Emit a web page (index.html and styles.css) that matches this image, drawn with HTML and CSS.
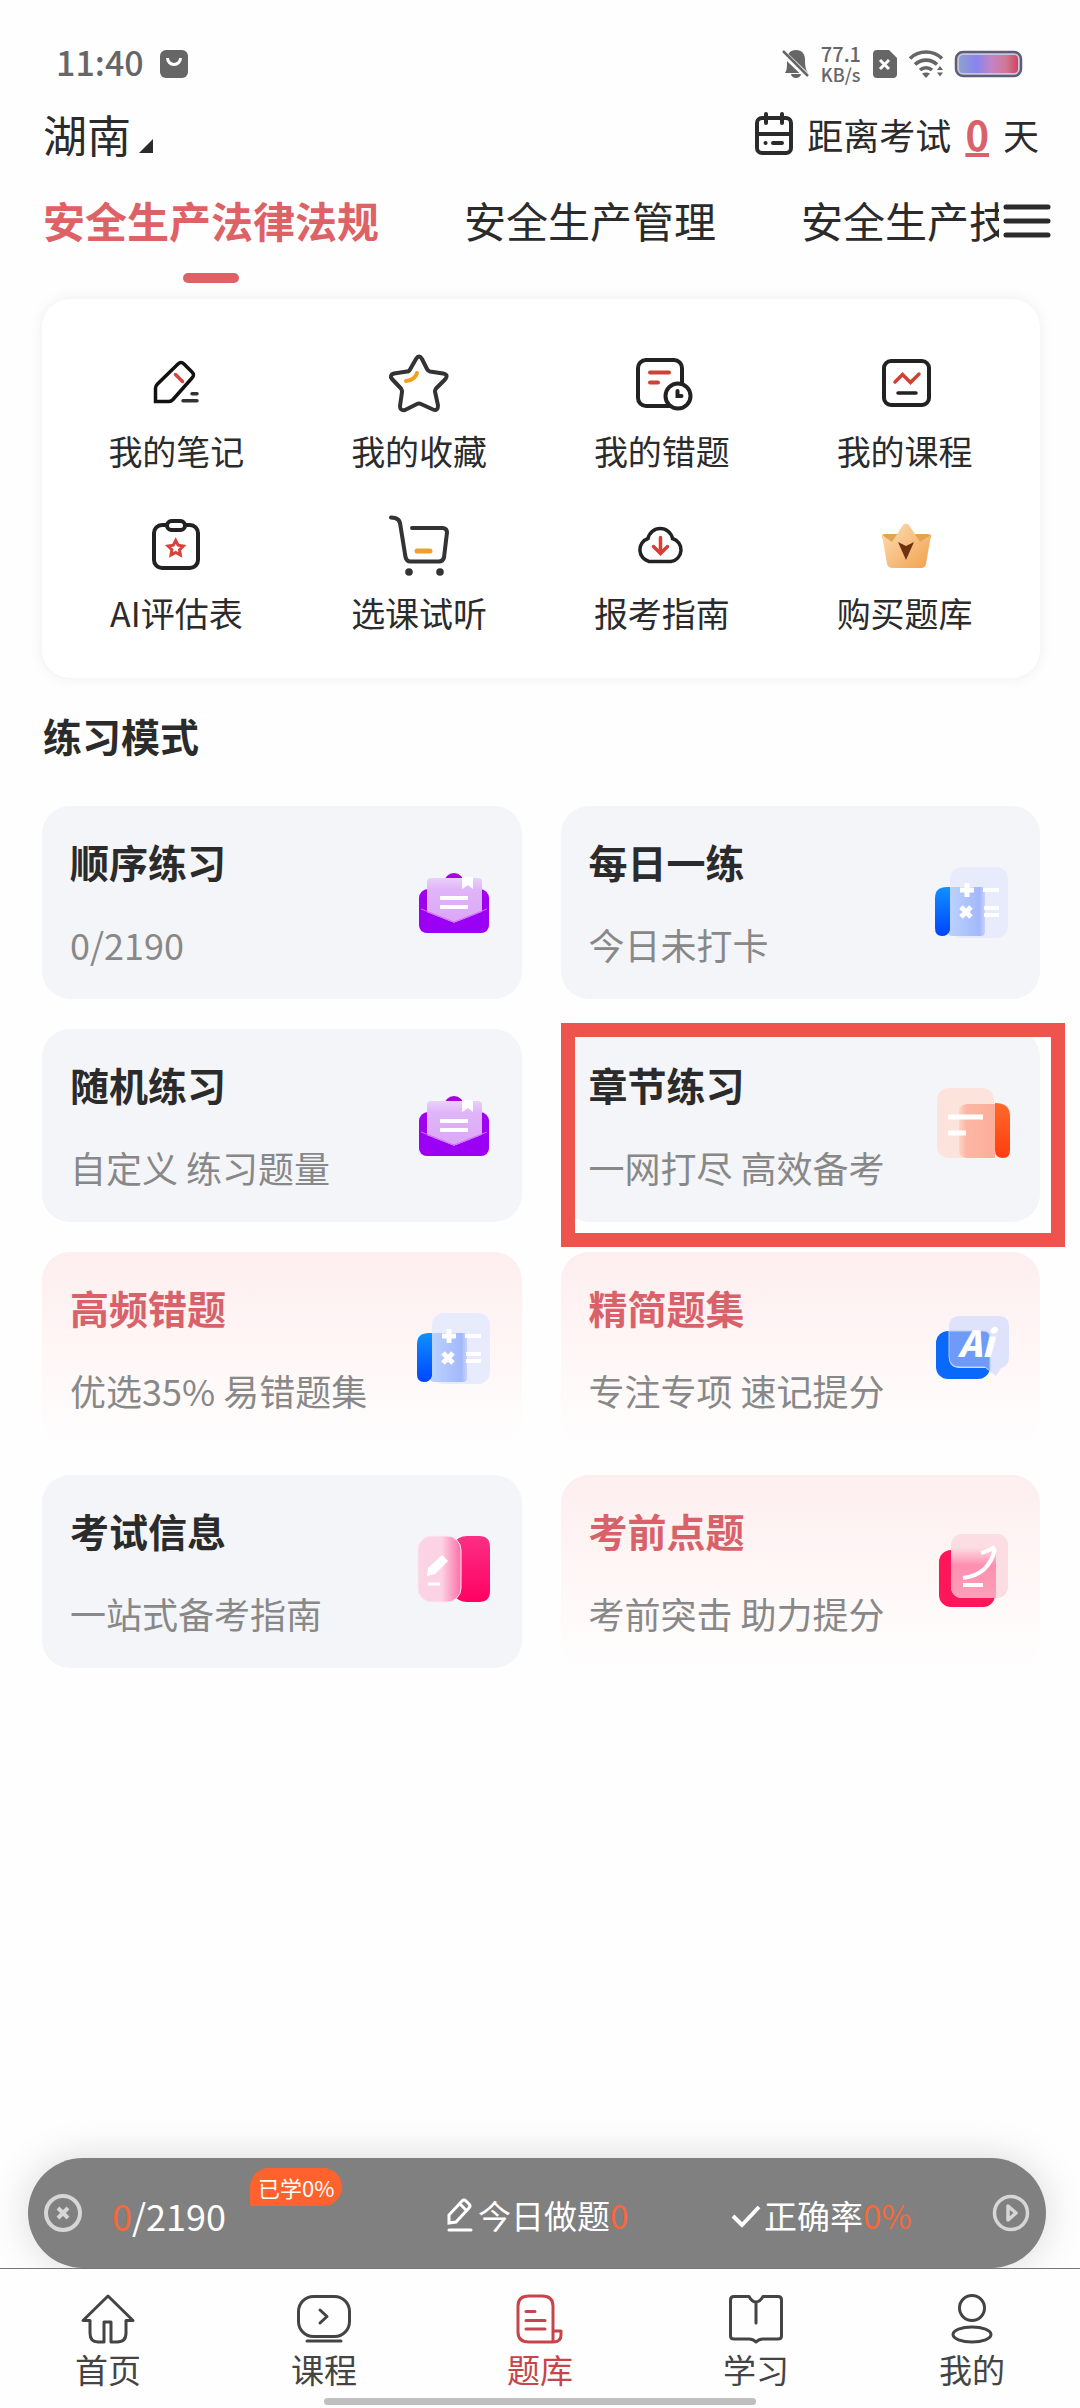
FILE: index.html
```
<!DOCTYPE html>
<html lang="zh-CN">
<head>
    <meta charset="UTF-8">
    <meta name="viewport" content="width=device-width, initial-scale=1">
    <title>题库</title>
    <link rel="stylesheet" href="styles.css">
</head>
<body>

<!-- shared gradients and the icons used more than once -->
<svg class="defs" width="0" height="0" aria-hidden="true">
    <defs>
        <linearGradient id="blue" x1="0" y1="0" x2="0" y2="1"><stop offset="0" stop-color="#1090ff"/><stop offset="1" stop-color="#0044ff"/></linearGradient>
        <linearGradient id="orange" x1="0" y1="0" x2="0" y2="1"><stop offset="0" stop-color="#ff6a2c"/><stop offset="1" stop-color="#ff3c0c"/></linearGradient>
        <linearGradient id="pink" x1="0" y1="0" x2="0" y2="1"><stop offset="0" stop-color="#fb2f85"/><stop offset="1" stop-color="#ff0062"/></linearGradient>
        <linearGradient id="paper" x1="0" y1="0" x2="0" y2="1"><stop offset="0" stop-color="#ead0fa"/><stop offset="0.25" stop-color="#e0b5f8"/><stop offset="1" stop-color="#dba6f6"/></linearGradient>
        <linearGradient id="gold" x1="0" y1="0" x2="1" y2="1"><stop offset="0" stop-color="#fce0b8"/><stop offset="1" stop-color="#f2a04c"/></linearGradient>
        <linearGradient id="calcPane" x1="0" y1="0" x2="1" y2="0"><stop offset="0" stop-color="#bcd3fd"/><stop offset="0.85" stop-color="#a3b8fb"/><stop offset="1" stop-color="#c9d2fb"/></linearGradient>
        <linearGradient id="chapterPane" x1="0" y1="0" x2="1" y2="0"><stop offset="0" stop-color="#fcd5c9"/><stop offset="0.2" stop-color="#fcb7a4"/><stop offset="1" stop-color="#fcae9a"/></linearGradient>
        <linearGradient id="bookPane" x1="0" y1="0" x2="1" y2="0"><stop offset="0.55" stop-color="#fbd3e3"/><stop offset="1" stop-color="#fc6fa8"/></linearGradient>
        <linearGradient id="tipPane" x1="0" y1="0" x2="0" y2="1"><stop offset="0" stop-color="#fcdbe2"/><stop offset="0.35" stop-color="#fd8fb0"/><stop offset="1" stop-color="#fda0b8"/></linearGradient>
        <linearGradient id="cell" x1="0" y1="0" x2="1" y2="0"><stop offset="0" stop-color="#8ea0cc"/><stop offset="0.3" stop-color="#8884f0"/><stop offset="0.55" stop-color="#c483c4"/><stop offset="0.8" stop-color="#cf7894"/><stop offset="1" stop-color="#d04460"/></linearGradient>

        <symbol id="icon-mail" viewBox="0 0 80 80">
            <circle cx="40" cy="22" r="10" fill="#a800e0"/>
            <rect x="5" y="28" width="70" height="44" rx="9" fill="#a000f0"/>
            <path d="M13 52V21q0-4 4-4h47q4 0 4 4v31L40 62z" fill="url(#paper)"/>
            <path d="M5 48l35 14 35-14v15q0 9-9 9H14q-9 0-9-9z" fill="#9b00f5"/>
            <path d="M7 48l33 13 33-13" fill="none" stroke="#cf6df8" stroke-width="1"/>
            <path d="M26 37h28M26 46h28" stroke="#fff" stroke-width="4"/>
            <path d="M48 16h11v12l-5-4-6 4z" fill="#fff"/>
        </symbol>
        <symbol id="icon-calc" viewBox="0 0 80 80">
            <rect x="18" y="6" width="58" height="71" rx="12" fill="#e8ebfc"/>
            <rect x="16" y="26" width="37" height="49" rx="4" fill="url(#calcPane)"/>
            <path d="M18 26v43q-2 6-8 6-7 0-7-8V37q0-11 12-11z" fill="url(#blue)"/>
            <g stroke="#fff" stroke-width="5">
                <path d="M28 29h14M35 22v14M29 46l10 10M39 46L29 56"/>
                <path d="M51 29h16M52 47h15M52 54h15" stroke-width="4"/>
            </g>
        </symbol>
    </defs>
</svg>

<div class="page">
    <div class="status">
        <div class="status-group">
            <span class="clock">11:40</span>
            <svg width="28" height="28" viewBox="0 0 28 28"><rect width="28" height="28" rx="6" fill="#666"/><path d="M7.500 8a6.500 6.500 0 0 0 13 0" fill="none" stroke="#fff" stroke-width="3"/></svg>
        </div>
        <div class="status-group">
            <svg width="26" height="30" viewBox="0 0 26 30"><path d="M13 1c6 0 9 4 9 10 0 7 1 10 3 13H2c2-3 2-6 2-13C4 5 7 1 13 1zM8 25h10a5 4 0 0 1-10 0z" fill="#666"/><path d="M-1 3l26 25" stroke="#fff" stroke-width="6"/><path d="M0 2l25 25" stroke="#666" stroke-width="2.500"/></svg>
            <span class="speed"><span>77.1</span><small>KB/s</small></span>
            <svg width="24" height="28" viewBox="0 0 24 28"><path d="M4 0h12l8 8v16q0 4-4 4H4q-4 0-4-4V4q0-4 4-4z" fill="#666"/><path d="M7 10l9 9M16 10l-9 9" stroke="#fff" stroke-width="3"/></svg>
            <svg width="34" height="28" viewBox="0 0 34 28"><g fill="none" stroke="#666" stroke-width="3.600"><path d="M1 8.500a23 23 0 0 1 32 0"/><path d="M6 14.500a16 16 0 0 1 22 0"/><path d="M11 20a9 9 0 0 1 12 0"/></g><path d="M13 23.500q4-2 8 0L17 28zM28 20l3-4 3 4zM28 22.500h6l-3 4z" fill="#666"/></svg>
            <svg width="67" height="26" viewBox="0 0 67 26"><rect x="1" y="1" width="65" height="24" rx="7" fill="#c8c6dc" stroke="#5d5d78" stroke-width="2.500"/><rect x="4" y="4" width="59" height="18" rx="4" fill="url(#cell)"/></svg>
        </div>
    </div>

    <header class="topbar">
        <button class="city" type="button">湖南
            <svg width="14" height="14" viewBox="0 0 14 14"><path d="M14 0v14H0z" fill="#2b2b2b"/></svg>
        </button>
        <p class="countdown">
            <svg width="38" height="44" viewBox="0 0 38 44" fill="none" stroke="#2b2b2b" stroke-width="4" stroke-linecap="round"><rect x="2" y="6" width="34" height="35" rx="5"/><path d="M11 2v9M27 2v9M2 22h34M18 31h9"/><path d="M10.500 31h.1"/></svg>
            距离考试 <b>0</b> 天
        </p>
    </header>

    <nav class="tabs">
        <div class="tab-list">
            <a class="tab active" href="#">安全生产法律法规</a>
            <a class="tab" href="#">安全生产管理</a>
            <a class="tab" href="#">安全生产技术基础</a>
        </div>
        <button class="menu" type="button" aria-label="全部科目">
            <svg width="48" height="34" viewBox="0 0 48 34" stroke="#2b2b2b" stroke-width="5" stroke-linecap="round"><path d="M3 3h42M3 17h42M3 31h42"/></svg>
        </button>
    </nav>

    <section class="shortcuts">
        <a class="shortcut" href="#">
            <svg viewBox="0 0 60 60" fill="none" stroke="#111" stroke-width="3.500" stroke-linecap="round"><path d="M9.500 48.500V35q0-2 2-4L32 11q3-3 6 0l8 8q3 3 0 6L27 46.500q-2 2-4 2z"/><path d="M37 47.700h14M46 40.700h5" stroke="#333"/><path d="M29.500 21.500l7 7" stroke="#d6453f"/></svg>
            我的笔记
        </a>
        <a class="shortcut" href="#">
            <svg viewBox="0 0 60 60" fill="none" stroke="#333" stroke-width="4" stroke-linecap="round" stroke-linejoin="round"><path d="M27 6q3-5 6 0l5 10q1 2 3 2.500l13 2q6 1 2 6L47 35.500q-1 1.500-1 3l3 14q0 6-5 4L32 51q-2-1-4 0l-12 6q-5 1-5-4l2-14q0-2-1-3.500L3 26q-3-4 2-5.500l13-2q2 0 3-2z"/><path d="M28 20q-2 7-11 8" stroke="#f0a01c"/></svg>
            我的收藏
        </a>
        <a class="shortcut" href="#">
            <svg viewBox="0 0 60 60" fill="none" stroke="#222" stroke-width="4" stroke-linecap="round"><rect x="6" y="7" width="44" height="46" rx="8"/><path d="M18 19.500h19M18 29.500h8" stroke="#cb4335"/><circle cx="46" cy="43" r="12.500" fill="#fff"/><path d="M45.500 38v5h4"/></svg>
            我的错题
        </a>
        <a class="shortcut" href="#">
            <svg viewBox="0 0 60 60" fill="none" stroke="#222" stroke-width="4" stroke-linecap="round"><rect x="9" y="8" width="45" height="44" rx="7"/><path d="M20 29l7.500-7.500 8 8L44 21" stroke="#cb4335" stroke-width="3.500"/><path d="M23 40h18" stroke-width="3.500"/></svg>
            我的课程
        </a>
        <a class="shortcut" href="#">
            <svg viewBox="0 0 60 60" fill="none" stroke="#222" stroke-width="4"><rect x="8" y="10" width="44" height="43" rx="8"/><rect x="21" y="6" width="18" height="9" rx="4.500" fill="#fff"/><path d="M29.700 25.500l2.400 4.700 5.200.8-3.800 3.700.9 5.300-4.700-2.500-4.700 2.500.9-5.300-3.800-3.700 5.200-.8z" stroke="#d93f3c" stroke-width="3"/></svg>
            AI评估表
        </a>
        <a class="shortcut" href="#">
            <svg viewBox="0 0 60 60" fill="none" stroke="#333" stroke-width="4" stroke-linecap="round"><path d="M2 2.500l4 .5q4 1 5 5l5.500 34q1 4.500 5 4.500H50q4 0 5-4l3-25q0-4-4-4.500H23"/><path d="M28 36h13" stroke="#eda02a" stroke-width="5"/><g fill="#333" stroke="none"><circle cx="20" cy="57" r="3.800"/><circle cx="51" cy="57" r="3.800"/></g></svg>
            选课试听
        </a>
        <a class="shortcut" href="#">
            <svg viewBox="0 0 60 60" fill="none" stroke="#222" stroke-width="3.500" stroke-linecap="round"><path d="M17 46.500A12 12 0 0 1 16 23.500A12.500 12.500 0 0 1 40.500 23.500A11.800 11.800 0 0 1 39 46.500Z"/><path d="M28.500 22.500V38M21.500 31.500l7 7 7-7" stroke="#dd3b34"/></svg>
            报考指南
        </a>
        <a class="shortcut" href="#">
            <svg viewBox="0 0 60 60"><path d="M7 21q0-2 3-2h12l9 10 9-10h12q5 0 4 3l-4 10-22 6-20-6z" fill="#e2a452"/><path d="M7 20l10 7L28 10q3-3 6 0l11 17 11-7-5 29q-1 4-5 4H18q-5 0-6-4z" fill="url(#gold)"/><path d="M23 27l8 4 8-4-8 18z" fill="#6b3310"/></svg>
            购买题库
        </a>
    </section>

    <h2 class="section-title">练习模式</h2>

    <section class="modes">
        <a class="mode" href="#">
            <div>
                <h3>顺序练习</h3>
                <p>0/2190</p>
            </div>
            <svg><use href="#icon-mail"/></svg>
        </a>
        <a class="mode" href="#">
            <div>
                <h3>每日一练</h3>
                <p>今日未打卡</p>
            </div>
            <svg><use href="#icon-calc"/></svg>
        </a>
        <a class="mode" href="#">
            <div>
                <h3>随机练习</h3>
                <p>自定义 练习题量</p>
            </div>
            <svg><use href="#icon-mail"/></svg>
        </a>
        <a class="mode marked" href="#">
            <div>
                <h3>章节练习</h3>
                <p>一网打尽 高效备考</p>
            </div>
            <svg viewBox="0 0 80 80"><rect x="5" y="4" width="57" height="70" rx="12" fill="#fce4dc"/><path d="M36 20h27v54H36q-9 0-9-8V28q0-8 9-8z" fill="url(#chapterPane)"/><path d="M63 19q15 0 15 13v34q0 8-7 8-8 0-8-8z" fill="url(#orange)"/><path d="M16 33h35M16 49h18" stroke="#fff" stroke-width="5"/></svg>
        </a>
        <a class="mode hot" href="#">
            <div>
                <h3>高频错题</h3>
                <p>优选35% 易错题集</p>
            </div>
            <svg><use href="#icon-calc"/></svg>
        </a>
        <a class="mode hot" href="#">
            <div>
                <h3>精简题集</h3>
                <p>专注专项 速记提分</p>
            </div>
            <svg viewBox="0 0 80 80"><rect x="4" y="24" width="54" height="48" rx="12" fill="#0869fb"/><path d="M28 9h38q11 0 11 11v30q0 9-8 11l-5 8-10-8H28q-11 0-11-11V20q0-11 11-11z" fill="#dfe2fb"/><path d="M17 24h34q7 0 7 7v33l-5-4H28q-11 0-11-11z" fill="#6f9af8" stroke="#b9cdfc" stroke-width="1"/><text class="ai" x="26" y="50">Ai</text></svg>
        </a>
        <a class="mode" href="#">
            <div>
                <h3>考试信息</h3>
                <p>一站式备考指南</p>
            </div>
            <svg viewBox="0 0 80 80"><path d="M39 14q5-8 14-8h12q11 0 11 11v44q0 11-11 11H53q-9 0-14-8z" fill="url(#pink)"/><rect x="4" y="6" width="43" height="66" rx="14" fill="url(#bookPane)" stroke="#fce6ee" stroke-width="1"/><path d="M13 46l1-8 14-13 6 6-13 13z" fill="#fff"/><path d="M14 54h12" stroke="#fff" stroke-width="3"/></svg>
        </a>
        <a class="mode hot" href="#">
            <div>
                <h3>考前点题</h3>
                <p>考前突击 助力提分</p>
            </div>
            <svg viewBox="0 0 80 80"><rect x="7" y="20" width="56" height="57" rx="12" fill="#fd1659"/><rect x="19" y="4" width="57" height="64" rx="11" fill="#fcdde4"/><path d="M19 18h45v50H31q-12 0-12-12z" fill="url(#tipPane)"/><path d="M31 48q26-3 32-29M49 23q8-2 14-6M31 55h20" fill="none" stroke="#fff" stroke-width="4"/></svg>
        </a>
    </section>

    <footer class="bottom">
        <div class="progress">
            <button type="button" aria-label="关闭">
                <svg width="38" height="38" viewBox="0 0 38 38" fill="none" stroke="#d6d6d6" stroke-width="4"><circle cx="19" cy="19" r="17"/><path d="M14 14l10 10M24 14L14 24"/></svg>
            </button>
            <div class="done"><em>0</em>/2190<span class="badge">已学0%</span></div>
            <div class="stat">
                <svg width="28" height="34" viewBox="0 0 28 34" fill="none" stroke="#fff" stroke-width="3" stroke-linecap="round"><path d="M3 25v-8L16 3q2-2 4 0l3 3q2 2 0 4L10 24zM14 6l6 6M3 32h22"/></svg>今日做题<em>0</em>
            </div>
            <div class="stat">
                <svg width="28" height="34" viewBox="0 0 28 34" fill="none" stroke="#fff" stroke-width="4"><path d="M1 18l9 9L27 9"/></svg>正确率<em>0%</em>
            </div>
            <button type="button" aria-label="继续">
                <svg width="38" height="38" viewBox="0 0 38 38" fill="none" stroke="#d6d6d6" stroke-width="3.500"><circle cx="19" cy="19" r="16.500"/><path d="M16 12v14l8-7z" stroke-linejoin="round"/></svg>
            </button>
        </div>

        <nav class="tabbar">
            <a href="#">
                <svg viewBox="0 0 54 50"><path d="M27 2L2 26.500h7V39q0 9 8 9h6V28h7v20h6q9 0 9-9V26.500h7z"/></svg>
                首页
            </a>
            <a href="#">
                <svg viewBox="0 0 54 50"><rect x="1.500" y="2.500" width="51" height="40" rx="15"/><path d="M23 16l7 6.500-7 6.500M10 47h34"/></svg>
                课程
            </a>
            <a class="current" href="#">
                <svg viewBox="0 0 54 50"><path d="M40 48H16Q5 48 5 38V12Q5 2 16 2h13q11 0 11 10v36q8 0 8-7v-4h-8M13 17.500h9M13 26.500h19M13 35h19"/></svg>
                题库
            </a>
            <a href="#">
                <svg viewBox="0 0 54 50"><path d="M27 29V8q-4 0-7-5.500H5q-3.500 0-3.500 3.500v36q0 3 3.500 3h15q4 0 7 3 3-3 7-3h15q3.500 0 3.500-3V6q0-3.500-3.500-3.500H34Q31 8 27 8"/></svg>
                学习
            </a>
            <a href="#">
                <svg viewBox="0 0 54 50"><circle cx="27" cy="14" r="12.500"/><ellipse cx="27" cy="40.500" rx="19" ry="7.500"/></svg>
                我的
            </a>
        </nav>
        <div class="home-line"></div>
    </footer>
</div>

</body>
</html>
```
FILE: styles.css
```
* {
    box-sizing: border-box;
    margin: 0;
    padding: 0;
}
body {
    font-family: "Noto Sans CJK SC", "Noto Sans", sans-serif;
    background-color: #fefefe;
    color: #2b2b2b;
}
a {
    color: inherit;
    text-decoration: none;
}
button {
    border: none;
    background: none;
    font: inherit;
    color: inherit;
    cursor: pointer;
}
em {
    font-style: normal;
    color: #f4683c;
}
svg {
    display: block;
    flex-shrink: 0;
    overflow: visible;
}
.defs {
    position: absolute;
}
.page {
    display: flex;
    flex-direction: column;
    min-height: 100vh;
    overflow: hidden;
}

/* status bar */
.status {
    display: flex;
    justify-content: space-between;
    padding: 40px 58px 0 56px;
    color: #666;
}
.status-group {
    display: flex;
    align-items: center;
    gap: 12px;
    height: 48px;
}
.clock {
    font-size: 34px;
    font-weight: 500;
    line-height: 44px;
    padding-bottom: 4px;
    margin-right: 4px;
}
.speed {
    display: flex;
    flex-direction: column;
    font-size: 20px;
    font-weight: 500;
    line-height: 20px;
}
.speed small {
    font-size: 18px;
}

/* city and countdown */
.topbar {
    display: flex;
    justify-content: space-between;
    align-items: center;
    padding: 16px 41px 0 43px;
}
.city {
    display: flex;
    align-items: baseline;
    gap: 8px;
    font-size: 44px;
    line-height: 60px;
}
.countdown {
    display: flex;
    align-items: center;
    gap: 14px;
    font-size: 36px;
    line-height: 60px;
}
.countdown b {
    font-size: 40px;
    color: #d9626a;
    text-decoration: underline;
}

/* subject tabs */
.tabs {
    display: flex;
    align-items: flex-start;
    gap: 4px;
    padding: 26px 29px 0 43px;
}
.tab-list {
    display: flex;
    flex: 1;
    gap: 85px;
    overflow: hidden;
    white-space: nowrap;
}
.tab {
    font-size: 42px;
    line-height: 60px;
}
.active {
    font-weight: bold;
    color: #dc6266;
}
.active::after {
    content: "";
    display: block;
    width: 56px;
    height: 10px;
    margin: 23px auto 0;
    border-radius: 5px;
    background-color: #dc6266;
}
.menu {
    padding-top: 14px;
}

/* shortcut panel */
.shortcuts {
    display: grid;
    grid-template-columns: repeat(4, 1fr);
    row-gap: 42px;
    margin: 16px 40px 0 42px;
    padding: 54px 14px 43px 13px;
    border-radius: 28px;
    background-color: #fff;
    box-shadow: 0 0 14px rgba(0, 0, 0, 0.07);
}
.shortcut {
    display: flex;
    flex-direction: column;
    align-items: center;
    gap: 16px;
    font-size: 34px;
    line-height: 44px;
}
.shortcut svg {
    width: 60px;
    height: 60px;
}

/* practice modes */
.section-title {
    margin: 27px 43px 41px;
    font-size: 39px;
    line-height: 60px;
}
.modes {
    display: grid;
    grid-template-columns: 1fr 1fr;
    gap: 30px 39px;
    margin: 0 40px 0 42px;
}
.mode {
    display: flex;
    justify-content: space-between;
    align-items: center;
    padding: 27px 28px 30px;
    border-radius: 28px;
    background-color: #f4f5f8;
}
.mode h3 {
    font-size: 39px;
    line-height: 56px;
}
.mode p {
    margin-top: 30px;
    font-size: 36px;
    line-height: 50px;
    color: #888;
}
.mode svg {
    width: 80px;
    height: 80px;
}
.mode .ai {
    font-size: 36px;
    font-style: italic;
    font-weight: 900;
    fill: #fff;
}
.hot {
    background: linear-gradient(#fdeeef, #fff6f6 50%, #fefefe);
}
.hot h3 {
    color: #d9626a;
}
.marked {
    position: relative;
}
.marked::after {
    content: "";
    position: absolute;
    inset: -6px -25px -25px 0;
    border: 14px solid #ef534d;
}

/* floating progress bar */
.bottom {
    display: flex;
    flex-direction: column;
    margin-top: auto;
    padding-bottom: 3px;
}
.progress {
    display: grid;
    grid-template-columns: 38px 1.4fr 1.1fr 1fr 38px;
    align-items: center;
    margin: 0 34px 0 28px;
    padding: 0 16px;
    height: 110px;
    border-radius: 55px;
    background-color: #808080;
    box-shadow: 0 0 40px rgba(0, 0, 0, 0.15);
    color: #fff;
}
.done {
    position: relative;
    padding: 4px 0 0 30px;
    font-size: 36px;
    line-height: 50px;
}
.badge {
    position: absolute;
    left: 168px;
    top: -18px;
    padding: 0 8px;
    border-radius: 20px 20px 20px 2px;
    background-color: #ff622c;
    font-size: 22px;
    line-height: 38px;
}
.stat {
    display: flex;
    align-items: center;
    padding-top: 3px;
    font-size: 33px;
    line-height: 50px;
}
.stat svg {
    margin-right: 4px;
}

/* bottom navigation */
.tabbar {
    position: relative;
    display: grid;
    grid-template-columns: repeat(5, 1fr);
    padding: 25px 0 9px;
    border-top: 1px solid #777;
    background-color: #fefefe;
}
.tabbar a {
    display: flex;
    flex-direction: column;
    align-items: center;
    gap: 5px;
    font-size: 33px;
    line-height: 40px;
    color: #444;
}
.tabbar svg {
    width: 54px;
    height: 50px;
    fill: none;
    stroke: currentColor;
    stroke-width: 3;
    stroke-linecap: round;
    stroke-linejoin: round;
}
.tabbar .current {
    color: #c9444a;
}
.home-line {
    width: 40%;
    height: 7px;
    margin: 0 auto;
    border-radius: 4px;
    background-color: #bfbfbf;
}
```
